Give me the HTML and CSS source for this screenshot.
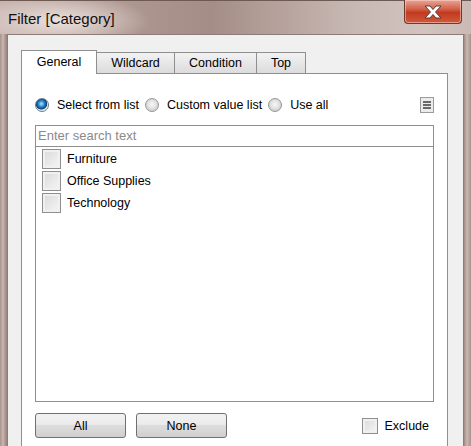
FILE: index.html
```html
<!DOCTYPE html>
<html>
<head>
<meta charset="utf-8">
<link rel="stylesheet" href="styles.css">
</head>
<body>
<div class="window">
  <div class="titlebar">
    <div class="title">Filter [Category]</div>
    <div class="close">
      <svg width="22" height="14" viewBox="0 0 22 14"><path d="M3 1 L8 1 L11 4.5 L14 1 L19 1 L13.5 7 L19 13 L14 13 L11 9.5 L8 13 L3 13 L8.5 7 Z" fill="#fff" stroke="#5a3a36" stroke-width="1"/></svg>
    </div>
  </div>
  <div class="client">
    <div class="tabs">
      <div class="tab active">General</div>
      <div class="tab">Wildcard</div>
      <div class="tab">Condition</div>
      <div class="tab">Top</div>
    </div>
    <div class="page">
      <div class="radios">
        <span class="radio on"></span><span class="rlabel">Select from list</span>
        <span class="radio"></span><span class="rlabel">Custom value list</span>
        <span class="radio"></span><span class="rlabel">Use all</span>
        <span class="menu"><i></i><i></i><i></i></span>
      </div>
      <div class="list">
        <div class="search">Enter search text</div>
        <div class="items">
          <div class="item"><span class="cb"></span>Furniture</div>
          <div class="item"><span class="cb"></span>Office Supplies</div>
          <div class="item"><span class="cb"></span>Technology</div>
        </div>
      </div>
      <div class="bottom">
        <button class="btn">All</button>
        <button class="btn">None</button>
        <span class="spacer"></span>
        <span class="cb small"></span><span class="exlabel">Exclude</span>
      </div>
    </div>
  </div>
</div>
</body>
</html>
```
FILE: styles.css
```css
html, body { margin: 0; padding: 0; }
body {
  width: 471px; height: 446px; overflow: hidden;
  font-family: "Liberation Sans", "DejaVu Sans", sans-serif;
  font-size: 12.5px; color: #000;
  background: #b09a94;
}
.window {
  width: 471px; height: 446px;
  background: linear-gradient(90deg, #a8918b 0px, #c9b8b3 3px, #a28a84 6px, #a28a84 464px, #c9b8b3 467px, #a8918b 471px);
  position: relative;
}
.titlebar {
  height: 34px;
  display: flex; align-items: flex-start;
  background:
    radial-gradient(ellipse 90px 26px at 60px 20px, rgba(240,232,228,0.9), rgba(240,232,228,0) 100%),
    linear-gradient(90deg, #c7b3ae 0%, #ad958f 30%, #a58d87 45%, #c8b8b3 75%, #d2c3bf 90%, #cbb9b4 100%);
  border-top: 1px solid #6e5a55;
  box-sizing: border-box;
}
.title {
  font-size: 15px; color: #111;
  padding: 9px 0 0 8px;
  flex: 1;
}
.close {
  width: 58px; height: 24px; margin-right: 9px; margin-top: -1px;
  box-sizing: border-box;
  border: 1px solid #6a3a34; border-top: none;
  border-radius: 0 0 4px 4px;
  background: linear-gradient(#e8a595 0%, #d26048 40%, #c23a1f 55%, #d05a3c 100%);
  display: flex; align-items: center; justify-content: center;
  box-shadow: inset 0 0 0 1px rgba(255,220,210,0.5);
}
.client {
  position: absolute; left: 7px; top: 34px; width: 457px; height: 412px;
  box-sizing: border-box;
  background: #f0f0f0;
  border: 1px solid #8a7c78;
  border-bottom: none;
  padding: 14px 0 0 13px;
}
.tabs { display: flex; align-items: flex-end; height: 24px; }
.tab {
  box-sizing: border-box;
  height: 21px;
  border: 1px solid #8e8f8f; border-bottom: none; border-left: none;
  background: linear-gradient(#f2f2f2, #dcdcdc);
  display: flex; align-items: center; justify-content: center;
}
.tab.active {
  height: 24px; width: 76px;
  background: #fff; border-left: 1px solid #8e8f8f;
  position: relative; top: 1px; z-index: 2;
  align-items: flex-start; padding-top: 4px;
}
.tab:nth-child(2) { width: 78px; }
.tab:nth-child(3) { width: 82px; }
.tab:nth-child(4) { width: 49px; }
.page {
  width: 427px; height: 380px;
  box-sizing: border-box;
  background: #fff;
  border: 1px solid #8e8f8f;
  padding: 0 13px 0 13px;
}
.radios {
  display: flex; align-items: center;
  height: 18px; margin-top: 22px;
}
.radio {
  width: 14px; height: 14px; border-radius: 50%;
  box-sizing: border-box;
  border: 1px solid #979797;
  background: radial-gradient(circle at 50% 45%, #f8f8f8 0%, #e2e2e2 45%, #c4c4c4 85%);
  margin: 0 8px 0 0;
}
.radio.on {
  border-color: #6b7d8c;
  background: radial-gradient(circle at 45% 40%, #b6e4ff 0%, #2c8ad0 30%, #0d3e74 55%, #dfe8ef 62%, #f0f4f7 100%);
}
.rlabel { margin-right: 6px; }
.menu {
  margin-left: auto;
  width: 14px; height: 16px; box-sizing: border-box;
  border: 1px solid #9a9a9a; background: #ececec;
  display: flex; flex-direction: column; align-items: center; justify-content: center; gap: 1px;
}
.menu i { display: block; width: 8px; height: 2px; background: #6a6a6a; }
.list {
  margin-top: 11px;
  height: 277px;
  box-sizing: border-box;
  border: 1px solid #8e8f8f;
}
.search {
  height: 21px; box-sizing: border-box;
  border-bottom: 1px solid #8e8f8f;
  color: #8a8a8a; padding: 2px 0 0 2px;
  font-size: 13px;
}
.items { padding-top: 1px; }
.item {
  display: flex; align-items: center; height: 22px;
  padding-left: 6px;
}
.cb {
  width: 19px; height: 20px; box-sizing: border-box;
  border: 1px solid #8f8f8f;
  background: linear-gradient(135deg, #d9d9d9, #f6f6f6);
  box-shadow: inset 0 0 0 2px #f0f0f0;
  margin-right: 6px;
}
.bottom {
  display: flex; align-items: center; margin-top: 11px; height: 25px;
}
.btn {
  font: inherit;
  width: 91px; height: 25px; margin: 0 10px 0 0;
  border: 1px solid #707070; border-radius: 3px;
  background: linear-gradient(#f2f2f2 0%, #ebebeb 45%, #dddddd 50%, #cfcfcf 100%);
  color: #000; padding: 0;
}
.spacer { flex: 1; }
.cb.small { width: 16px; height: 16px; margin-right: 7px; }
.exlabel { margin-right: 5px; }
```
